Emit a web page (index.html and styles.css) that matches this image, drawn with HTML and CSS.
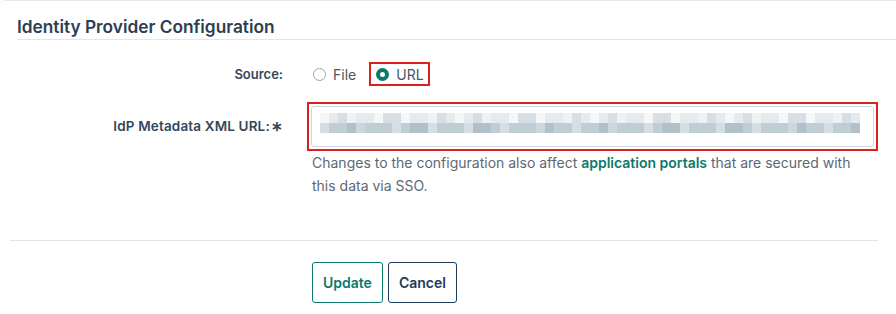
FILE: index.html
```html
<!DOCTYPE html>
<html>
  <head>
    <meta charset="utf-8" />
    <meta name="viewport" content="width=device-width, initial-scale=1" />
    <title>Identity Provider Configuration</title>
    <link rel="stylesheet" href="styles.css">
  </head>
  <body>
    <div class="card">
      <h2 class="card-title">Identity Provider Configuration</h2>
      <form class="idp-form">
        <div class="form-row source-row">
          <label class="form-label">Source:</label>
          <div class="radio-group">
            <label class="radio-option">
              <span class="radio"></span>
              File
            </label>
            <label class="radio-option highlight">
              <span class="radio checked"></span>
              URL
            </label>
          </div>
        </div>
        <div class="form-row">
          <label class="form-label tall">IdP Metadata XML URL:<span class="req">∗</span></label>
          <div class="field">
            <div class="highlight-box">
              <div class="text-input">
                <!-- redacted value -->
                <div class="blur-row top"></div>
                <div class="blur-row bottom"></div>
              </div>
            </div>
            <p class="help">
              Changes to the configuration also affect <a href="#">application portals</a> that are secured with
              this data via SSO.
            </p>
          </div>
        </div>
        <hr class="divider" />
        <div class="actions">
          <button type="button" class="btn btn-primary">Update</button>
          <button type="button" class="btn btn-secondary">Cancel</button>
        </div>
      </form>
    </div>
  </body>
</html>
```

FILE: styles.css
```css
body {
  margin: 0;
  font-family: Inter, "Noto Sans", sans-serif;
  color: #2c3e50;
  background: #fff;
}

.card {
  height: 320px;
  border-top: 1px solid #e6e9eb;
  border-top-left-radius: 6px;
}

.card-title {
  margin: 0 0 0 17px;
  padding: 16px 0 2px;
  font-size: 17.3px;
  line-height: 20px;
  font-weight: 600;
  color: #2c3e50;
  border-bottom: 1px solid #e3e6e9;
}

.idp-form {
  padding: 22px 18px 0 0;
}

.form-row {
  display: grid;
  grid-template-columns: 283px 1fr;
  column-gap: 24px;
  margin-bottom: 16px;
}

.form-label {
  text-align: right;
  font-size: 13px;
  font-weight: 600;
  line-height: 24px;
  color: #33475b;
}

.form-label.tall {
  font-size: 13.5px;
  letter-spacing: 0.15px;
  line-height: 49px;
}

.req {
  margin-left: 1px;
}

.radio-group {
  display: flex;
  align-items: center;
  padding-left: 6px;
}

.radio-option {
  display: flex;
  align-items: center;
  gap: 7px;
  font-size: 14px;
  color: #4b5763;
}

.radio-option.highlight {
  margin-left: 13px;
  height: 20px;
  padding: 0 4px 0 5px;
  border: 2px solid #d9201f;
}

.radio {
  width: 13px;
  height: 13px;
  box-sizing: border-box;
  border: 1px solid #9aa5ae;
  border-radius: 50%;
  background: #fff;
}

.radio.checked {
  border: 4px solid #0b7a6c;
}

.highlight-box {
  border: 2px solid #d9201f;
  padding: 2px;
}

.text-input {
  height: 41px;
  box-sizing: border-box;
  border: 1px solid #cfd6dc;
  border-radius: 3px;
  padding: 6px 0 0 8px;
}

.blur-row {
  width: 540px;
  height: 10px;
}

.blur-row.top {
  background:
    repeating-linear-gradient(90deg, rgba(255, 255, 255, 0.6) 0 9px, transparent 9px 27px),
    repeating-linear-gradient(90deg, transparent 0 18px, rgba(150, 170, 185, 0.18) 18px 36px, transparent 36px 45px),
    #e5eaee;
}

.blur-row.bottom {
  background:
    repeating-linear-gradient(90deg, rgba(255, 255, 255, 0.35) 0 9px, transparent 9px 36px),
    repeating-linear-gradient(90deg, transparent 0 27px, rgba(120, 145, 165, 0.2) 27px 45px, transparent 45px 63px),
    #bfcdd5;
}

.help {
  margin: 0;
  padding: 0 24px 0 5px;
  font-size: 14px;
  line-height: 23px;
  color: #5d6873;
}

.help a {
  color: #0b7a6c;
  font-weight: 600;
  text-decoration: none;
}

.divider {
  margin: 43px 0 0 10px;
  border: 0;
  border-top: 1px solid #e4e4e4;
}

.actions {
  display: flex;
  gap: 5px;
  padding: 21px 0 0 312px;
}

.btn {
  height: 41px;
  padding: 0 10px;
  font-family: Inter, "Noto Sans", sans-serif;
  font-size: 14px;
  font-weight: 600;
  background: #fff;
  border-radius: 3px;
  cursor: pointer;
}

.btn-primary {
  color: #0b7a6c;
  border: 1px solid #0b7a6c;
}

.btn-secondary {
  color: #1b3a5c;
  border: 1px solid #1b3a5c;
}
```
